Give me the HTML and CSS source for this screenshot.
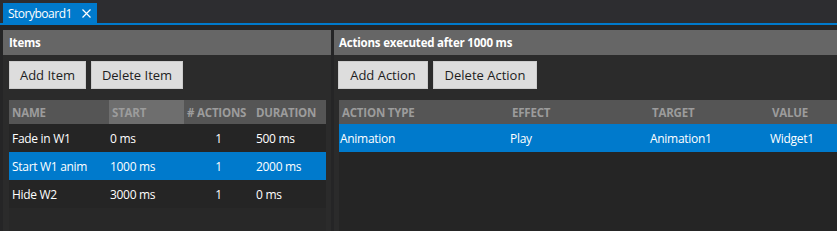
FILE: index.html
```html
<!DOCTYPE html>
<html>
<head>
<meta charset="utf-8">
<link rel="stylesheet" href="styles.css">
</head>
<body>
<div class="tabbar">
  <div class="tab"><span class="tab-title">Storyboard1</span><svg class="tab-close" width="9" height="9" viewBox="0 0 9 9"><path d="M0.5 0.5 L8.5 8.5 M8.5 0.5 L0.5 8.5" stroke="#ffffff" stroke-width="1.2" fill="none"/></svg></div>
</div>
<div class="tabline"></div>
<div class="content">
  <section class="panel panel-left">
    <div class="panel-header">Items</div>
    <div class="toolbar">
      <button class="btn">Add Item</button>
      <button class="btn">Delete Item</button>
    </div>
    <div class="table table-items">
      <div class="thead">
        <div class="th">NAME</div>
        <div class="th th-sorted">START</div>
        <div class="th">#&nbsp;ACTIONS</div>
        <div class="th">DURATION</div>
      </div>
      <div class="tr">
        <div class="td">Fade in W1</div>
        <div class="td td-start">0 ms</div>
        <div class="td td-center">1</div>
        <div class="td">500 ms</div>
      </div>
      <div class="tr tr-selected">
        <div class="td">Start W1 anim</div>
        <div class="td td-start">1000 ms</div>
        <div class="td td-center">1</div>
        <div class="td">2000 ms</div>
      </div>
      <div class="tr">
        <div class="td">Hide W2</div>
        <div class="td td-start">3000 ms</div>
        <div class="td td-center">1</div>
        <div class="td">0 ms</div>
      </div>
      <div class="tfill"></div>
    </div>
  </section>
  <section class="panel panel-right">
    <div class="panel-header">Actions executed after 1000 ms</div>
    <div class="toolbar">
      <button class="btn">Add Action</button>
      <button class="btn">Delete Action</button>
    </div>
    <div class="table table-actions">
      <div class="thead">
        <div class="th">ACTION TYPE</div>
        <div class="th">EFFECT</div>
        <div class="th">TARGET</div>
        <div class="th">VALUE</div>
      </div>
      <div class="tr tr-selected">
        <div class="td">Animation</div>
        <div class="td">Play</div>
        <div class="td">Animation1</div>
        <div class="td">Widget1</div>
      </div>
      <div class="tfill"></div>
    </div>
  </section>
</div>
</body>
</html>
```

FILE: styles.css
```css
* { box-sizing: border-box; }
html, body {
  margin: 0;
  height: 100%;
  overflow: hidden;
}
body {
  background: #2d2d30;
  font-family: "Open Sans", "Noto Sans", sans-serif;
  color: #ffffff;
  display: flex;
  flex-direction: column;
}
.tabbar {
  height: 23px;
  padding: 3px 0 0 3px;
  display: flex;
  flex: none;
}
.tab {
  background: #007acc;
  width: 94px;
  height: 20px;
  display: flex;
  align-items: center;
  padding: 0 0 0 5px;
  font-size: 12px;
  color: #ffffff;
}
.tab-title { letter-spacing: -0.5px; }
.tab-close {
  margin-left: auto;
  margin-right: 6px;
  display: block;
}
.tabline {
  height: 2px;
  background: #007acc;
  flex: none;
}
.content {
  flex: 1;
  display: flex;
  gap: 3px;
  padding: 5px 0 0 3px;
  background: #252526;
  min-height: 0;
}
.panel {
  display: flex;
  flex-direction: column;
  background: #2b2b2b;
}
.panel-left { width: 328px; padding-right: 5px; }
.panel-right { flex: 1; }
.panel-header {
  height: 25px;
  background: #666666;
  font-weight: 700;
  font-size: 11.5px;
  display: flex;
  align-items: center;
  padding-left: 6px;
  letter-spacing: -0.2px;
}
.panel-left .panel-header { margin-right: -5px; }
.panel-right .panel-header { padding-left: 5px; }
.toolbar {
  display: flex;
  gap: 5px;
  padding: 6px 0 11px 6px;
}
.panel-right .toolbar { padding-left: 4px; }
.btn {
  height: 28px;
  background: #dddddd;
  border: 1px solid #cccccc;
  color: #1e1e1e;
  font-family: inherit;
  font-size: 13px;
  padding: 0;
  margin: 0;
  border-radius: 0;
  white-space: nowrap;
  text-align: center;
}
.panel-left .btn:first-child { width: 77px; }
.panel-left .btn:last-child { width: 92px; }
.panel-right .btn:first-child { width: 90px; }
.panel-right .btn:last-child { width: 104px; }
.table {
  flex: 1;
  display: flex;
  flex-direction: column;
  margin-left: 6px;
  background: #262626;
}
.panel-right .table { margin-left: 5px; }
.thead, .tr { display: grid; }
.table-items .thead, .table-items .tr { grid-template-columns: 100px 75px 69px 1fr; }
.table-actions .thead, .table-actions .tr { grid-template-columns: 170px 140px 120px 1fr; }
.thead {
  height: 24px;
  background: #555555;
}
.th {
  display: flex;
  align-items: center;
  padding-left: 3px;
  font-weight: 700;
  font-size: 11.5px;
  color: #9c9c9c;
  white-space: nowrap;
  letter-spacing: -0.2px;
}
.th-sorted { background: #6e6e6e; }
.tr {
  height: 28px;
  background: #252525;
}
.tr-selected { background: #007acc; }
.td {
  display: flex;
  align-items: center;
  padding-left: 3px;
  font-size: 12px;
  color: #ffffff;
  white-space: nowrap;
  letter-spacing: -0.3px;
}
.td-start { padding-left: 1px; }
.td-center { justify-content: center; padding-left: 0; }
.table-actions .td { padding-left: 1px; }
.tfill { flex: 1; background: #282828; }
.table-actions .tfill { background: #252525; }
```
